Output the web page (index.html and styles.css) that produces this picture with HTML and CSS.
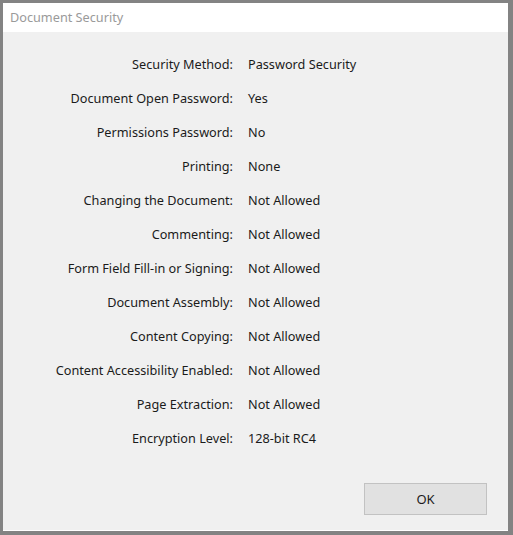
FILE: index.html
```html
<!DOCTYPE html>
<html>
<head>
<meta charset="utf-8">
<link rel="stylesheet" href="styles.css">
</head>
<body>
<div class="window">
  <div class="titlebar">Document Security</div>
  <div class="content">
    <div class="props">
      <div class="label">Security Method:</div><div class="value">Password Security</div>
      <div class="label">Document Open Password:</div><div class="value">Yes</div>
      <div class="label">Permissions Password:</div><div class="value">No</div>
      <div class="label">Printing:</div><div class="value">None</div>
      <div class="label">Changing the Document:</div><div class="value">Not Allowed</div>
      <div class="label">Commenting:</div><div class="value">Not Allowed</div>
      <div class="label">Form Field Fill-in or Signing:</div><div class="value">Not Allowed</div>
      <div class="label">Document Assembly:</div><div class="value">Not Allowed</div>
      <div class="label">Content Copying:</div><div class="value">Not Allowed</div>
      <div class="label">Content Accessibility Enabled:</div><div class="value">Not Allowed</div>
      <div class="label">Page Extraction:</div><div class="value">Not Allowed</div>
      <div class="label">Encryption Level:</div><div class="value">128-bit RC4</div>
    </div>
    <div class="actions">
      <button class="btn">OK</button>
    </div>
  </div>
</div>
</body>
</html>
```
FILE: styles.css
```css
html, body {
  margin: 0;
  padding: 0;
  width: 513px;
  height: 535px;
  overflow: hidden;
}
body {
  font-family: "Noto Sans", "Open Sans", sans-serif;
  background: #808080;
}
.window {
  box-sizing: border-box;
  width: 513px;
  height: 535px;
  border-style: solid;
  border-color: #838383;
  border-width: 3px 5px 4px 3px;
  background: #f0f0f0;
  display: flex;
  flex-direction: column;
}
.titlebar {
  height: 29px;
  background: #ffffff;
  color: #9a9a9a;
  font-size: 12.7px;
  line-height: 29px;
  padding-left: 7px;
}
.content {
  flex: 1;
  display: flex;
  flex-direction: column;
  border-bottom: 1px solid #ffffff;
  padding: 15px 21px 15px 0;
}
.props {
  display: grid;
  grid-template-columns: 230px 1fr;
  column-gap: 15px;
  grid-auto-rows: 34px;
  font-size: 12.7px;
  color: #1b1b1b;
}
.label, .value {
  display: flex;
  align-items: center;
}
.label {
  justify-content: flex-end;
}
.actions {
  margin-top: auto;
  display: flex;
  justify-content: flex-end;
}
.btn {
  width: 123px;
  height: 32px;
  background: #e1e1e1;
  border: 1px solid #c2c2c2;
  font-family: inherit;
  font-size: 13px;
  color: #1b1b1b;
  padding: 0;
}
```
